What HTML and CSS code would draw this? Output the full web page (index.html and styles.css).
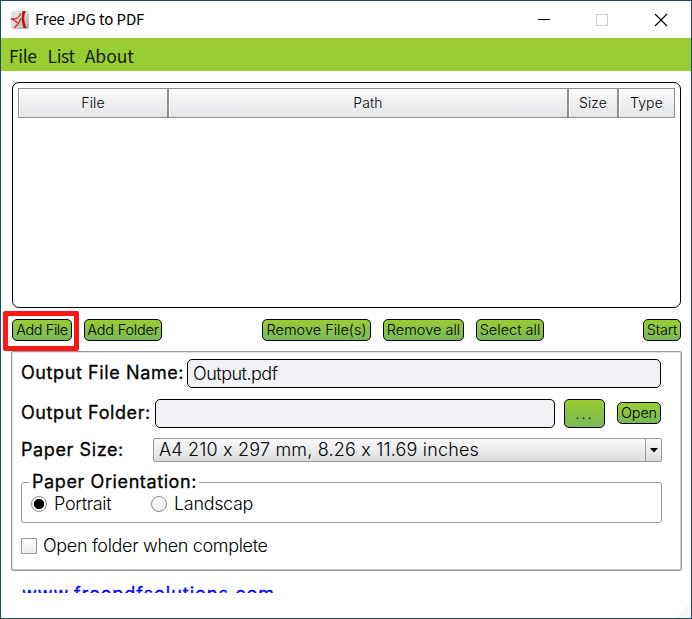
FILE: index.html
```html
<!DOCTYPE html>
<html lang="en">
<head>
<meta charset="utf-8">
<title>Free JPG to PDF</title>
<link rel="stylesheet" href="styles.css">
</head>
<body>
<div class="window">
  <header class="titlebar">
    <svg class="logo" width="20" height="20" viewBox="0 0 20 20">
      <defs><linearGradient id="lg" x1="0" y1="0" x2="1" y2="1"><stop offset="0" stop-color="#e8e8e8"/><stop offset=".5" stop-color="#d8d8d8"/><stop offset="1" stop-color="#aaa"/></linearGradient></defs>
      <rect x="1" y="1" width="18" height="18" rx="2" fill="url(#lg)"/>
      <path d="M12.500 1h3.500c-2.500 4-2.500 11 1 17h-3.500c-2-5-2.500-11-1-17z" fill="#c8140c"/>
      <path d="M1 8.500c4 1.500 7 .5 10-5M1 9c3 1 5 2 6.500 4M4 18c3.500-3 6-6 7-10" fill="none" stroke="#dc2a1e" stroke-width="1.300"/>
    </svg>
    <h1 class="title">Free JPG to PDF</h1>
    <svg class="controls" width="140" height="36" viewBox="0 0 140 36" fill="none" shape-rendering="crispEdges">
      <path d="M8 17.500h12" stroke="#000"/>
      <rect x="66.500" y="12.500" width="11" height="11" stroke="#ccc"/>
      <path d="M125 12l12 12M137 12l-12 12" stroke="#000" stroke-width="1.100" shape-rendering="auto"/>
    </svg>
  </header>
  <nav class="menu"><span>File</span><span>List</span><span>About</span></nav>
  <main class="content">
    <section class="list">
      <div class="list-head"><div>File</div><div>Path</div><div>Size</div><div>Type</div></div>
    </section>
    <div class="toolbar">
      <div class="highlight"></div>
      <button class="btn add-file"><span>Add File</span></button>
      <button class="btn add-folder"><span>Add Folder</span></button>
      <button class="btn remove-file"><span>Remove File(s)</span></button>
      <button class="btn remove-all"><span>Remove all</span></button>
      <button class="btn select-all"><span>Select all</span></button>
      <button class="btn start"><span>Start</span></button>
    </div>
    <section class="options">
      <div class="row name-row"><span class="label l-name">Output File Name:</span><div class="field"><span>Output.pdf</span></div></div>
      <div class="row folder-row"><span class="label l-folder">Output Folder:</span><div class="field"></div><button class="btn browse"><span>...</span></button><button class="btn open"><span>Open</span></button></div>
      <div class="row size-row"><span class="label l-size">Paper Size:</span>
        <div class="select"><span>A4 210 x 297 mm, 8.26 x 11.69 inches</span><i><svg width="8" height="5" viewBox="0 0 8 5"><path d="M0 0h8L4 4.500z"/></svg></i></div>
      </div>
      <div class="orientation">
        <span class="label legend">Paper Orientation:</span>
        <div class="radio on"></div><span class="choice portrait">Portrait</span>
        <div class="radio"></div><span class="choice landscape">Landscap</span>
      </div>
      <div class="check-row"><div class="check"></div><span class="choice complete">Open folder when complete</span></div>
    </section>
    <a class="link"><span>www.freepdfsolutions.com</span></a>
  </main>
  <svg class="grip" width="14" height="14" viewBox="0 0 14 14"><path d="M0 14L14 0M4 14L14 4M8 14L14 8M12 14l2-2" stroke="#eceef0" stroke-width="1.500"/></svg>
</div>
</body>
</html>
```
FILE: styles.css
```css
* { box-sizing: border-box; }
body { margin: 0; font-family: Inter, "Liberation Sans", sans-serif; font-weight: 300; font-feature-settings: "calt" 0; color: #000; }
.window { position: relative; width: 692px; height: 619px; border: 1px solid #1d4868; background: #fff; overflow: hidden; }
.titlebar { height: 37px; display: flex; align-items: center; padding: 0 21px 0 9px; }
.logo { flex: none; }
.title { margin: 0 auto 0 5px; font: 400 15px/20px "Noto Sans CJK KR", sans-serif; letter-spacing: -.1px; white-space: nowrap; position: relative; top: -1px; }
.controls { flex: none; }
.menu { height: 33px; padding: 2px 8px 0; display: flex; gap: 11px; background: #9acd32; font: 400 17.500px/32px "Noto Sans CJK KR", sans-serif; letter-spacing: -.4px; color: #10200a; }
.menu span:last-child { letter-spacing: 0; margin-left: -1px; }
.content { padding: 11px 10px 0 10px; }
.list { height: 226px; margin-left: 1px; border: 1.300px solid #000; border-radius: 7px; padding: 5px; }
.list-head { display: grid; grid-template-columns: 150px 400px 50px 57px; height: 30px; }
.list-head div { border: 1px solid #8e8e8e; background: linear-gradient(#fafafb, #e4e5e8); box-shadow: inset 1px 1px #fff; font-size: 14px; line-height: 28px; text-align: center; letter-spacing: .1px; }
.toolbar { position: relative; height: 22px; margin: 11px 0 10px 1px; display: flex; }
.highlight { position: absolute; left: -9px; top: -8px; width: 76px; height: 40px; border: 5px solid #ff1616; border-radius: 2px; }
.btn { flex: none; height: 22px; padding: 0; border: 1px solid #000; border-radius: 5px; background: linear-gradient(#9acd32, #78b85b); font: 300 14.500px/20px Inter, sans-serif; letter-spacing: -.2px; color: #000; white-space: nowrap; display: flex; justify-content: center; align-items: center; }
.add-file { width: 60px; letter-spacing: -.4px; }
.add-folder { width: 78px; margin-left: 12px; }
.remove-file { width: 109px; margin-left: 100px; letter-spacing: 0; }
.remove-all { width: 81px; margin-left: 12px; letter-spacing: 0; }
.select-all { width: 68px; margin-left: 12px; letter-spacing: 0; }
.start { width: 38px; margin-left: auto; }
.options { width: 671px; height: 220px; border: 1px solid #999; border-radius: 2px; box-shadow: inset -1px -1px #ccc, inset 1px 1px #e4e4e4; padding: 7px 19px 0 9px; }
.row { display: flex; align-items: center; white-space: nowrap; }
.label { flex: none; font-size: 18px; font-weight: 400; -webkit-text-stroke: .3px #000; letter-spacing: .6px; line-height: 22px; padding-bottom: 2px; }
.field { height: 29px; border: 1px solid #000; border-radius: 5px; background: #f1f2f5; padding-left: 5px; font-size: 18px; line-height: 28px; letter-spacing: -.5px; }
.name-row { height: 29px; }
.l-name { width: 166px; }
.name-row .field { width: 474px; }
.folder-row { height: 29px; margin-top: 11px; }
.l-folder { width: 134px; }
.folder-row .field { width: 400px; }
.browse { width: 41px; height: 29px; margin-left: 9px; letter-spacing: 2px; }
.open { width: 44px; margin-left: 12px; position: relative; top: -1px; }
.size-row { height: 24px; margin-top: 10px; }
.l-size { width: 132px; padding-bottom: 0; }
.select { width: 509px; height: 24px; flex: none; display: flex; border: 1px solid #999; border-radius: 2px; background: linear-gradient(#fafafb, #dcdde0); padding-left: 5px; font-size: 18px; line-height: 22px; letter-spacing: .18px; }
.select i { margin-left: auto; width: 16px; border-left: 1px solid #999; display: flex; align-items: center; justify-content: center; }
.orientation { position: relative; width: 641px; height: 41px; margin-top: 20px; border: 1px solid #999; border-radius: 3px; display: flex; align-items: center; padding: 2px 0 0 9px; }
.legend { position: absolute; left: 7px; top: -12px; width: 170px; padding-left: 3px; padding-bottom: 0; background: #fff; white-space: nowrap; }
.radio { flex: none; width: 16px; height: 16px; border: 1px solid #888; border-radius: 50%; background: linear-gradient(#fff, #eee); }
.radio.on { background: radial-gradient(circle, #000 4.800px, #fff 5.500px); }
.choice { font-size: 18px; margin-left: 7px; letter-spacing: -.33px; white-space: nowrap; }
.portrait { width: 97px; }
.check-row { display: flex; align-items: center; height: 22px; margin-top: 12px; }
.check { width: 16px; height: 16px; border: 1px solid #999; background: linear-gradient(#fff, #ececec); }
.complete { margin-left: 6px; padding-bottom: 1px; }
.link { display: block; height: 10px; margin: 12px 0 0 11px; overflow: hidden; color: #00f; font-size: 18px; font-weight: 400; -webkit-text-stroke: .3px #00f; letter-spacing: 1px; line-height: 22px; }
.link span { display: block; }
.grip { position: absolute; right: 0; bottom: 0; }
```
